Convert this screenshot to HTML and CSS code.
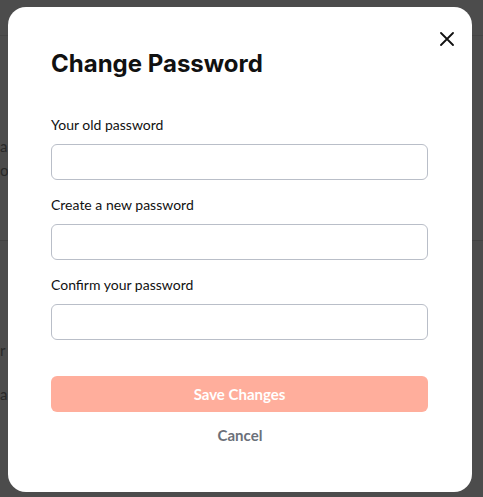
FILE: index.html
```html
<html lang="en">
<head>
    <meta charset="UTF-8">
    <meta name="viewport" content="width=device-width, initial-scale=1.0">
    <title>Change Password</title>
    <link rel="stylesheet" href="styles.css">
</head>
<body>
    <div class="page" aria-hidden="true">
        <div class="page-header"></div>
        <div class="page-body">
            <p class="ghost ghost-1">a</p>
            <p class="ghost ghost-2">o</p>
            <hr class="ghost-rule">
            <p class="ghost ghost-3">r</p>
            <p class="ghost ghost-4">a</p>
        </div>
    </div>
    <div class="overlay">
        <div class="modal" role="dialog" aria-labelledby="modal-title">
            <button class="close-btn" aria-label="Close">
                <svg width="14" height="14" viewBox="0 0 14 14" fill="none" stroke="#111" stroke-width="1.8" stroke-linecap="round">
                    <path d="M1 1L13 13M13 1L1 13"/>
                </svg>
            </button>
            <h1 id="modal-title" class="modal-title">Change Password</h1>
            <form class="form">
                <div class="field">
                    <label for="old-pw">Your old password</label>
                    <input id="old-pw" type="password">
                </div>
                <div class="field">
                    <label for="new-pw">Create a new password</label>
                    <input id="new-pw" type="password">
                </div>
                <div class="field">
                    <label for="confirm-pw">Confirm your password</label>
                    <input id="confirm-pw" type="password">
                </div>
                <button type="button" class="save-btn" disabled>Save Changes</button>
                <button type="button" class="cancel-btn">Cancel</button>
            </form>
        </div>
    </div>
</body>
</html>
```

FILE: styles.css
```css
:root {
    --modal-bg: #ffffff;
    --text-color: #111111;
    --border-color: #b9bec8;
    --save-bg: #ffae9c;
    --cancel-color: #6b7079;
    --font-family: 'Lato', 'Noto Sans', sans-serif;
    --title-font: 'Inter', 'Noto Sans', sans-serif;
}
body {
    margin: 0;
    height: 497px;
    overflow: hidden;
    font-family: var(--font-family);
    color: var(--text-color);
    background-color: #ffffff;
}
.page-header {
    height: 35px;
    border-bottom: 1px solid #e6e6e6;
}
.page-body {
    padding-top: 98px;
}
.ghost {
    margin: 0;
    padding-left: 0;
    font-size: 15px;
    line-height: 24px;
    color: #888;
}
.ghost-rule {
    margin: 58px 0 0;
    border: none;
    border-top: 1px solid #e0e0e0;
}
.ghost-3 {
    margin-top: 97px;
}
.ghost-4 {
    margin-top: 20px;
}
.overlay {
    position: fixed;
    inset: 0;
    background-color: rgba(0, 0, 0, 0.7);
}
.modal {
    position: relative;
    box-sizing: border-box;
    width: 464px;
    height: 485px;
    margin: 7px 0 0 8px;
    padding: 42px 43px 0 43px;
    background-color: var(--modal-bg);
    border-radius: 18px;
}
.close-btn {
    position: absolute;
    top: 24px;
    right: 17px;
    width: 16px;
    height: 16px;
    padding: 0;
    border: none;
    background: none;
    cursor: pointer;
    display: flex;
    align-items: center;
    justify-content: center;
}
.modal-title {
    margin: 0 0 36px;
    font-family: var(--title-font);
    font-size: 24px;
    line-height: 30px;
    font-weight: 700;
}
.form {
    display: flex;
    flex-direction: column;
    margin: 0;
}
.field {
    display: flex;
    flex-direction: column;
    margin-bottom: 15px;
}
.field label {
    font-size: 14px;
    line-height: 20px;
    margin-bottom: 9px;
}
.field input {
    box-sizing: border-box;
    width: 377px;
    height: 36px;
    margin: 0;
    border: 1px solid var(--border-color);
    border-radius: 6px;
    font-family: var(--font-family);
    font-size: 14px;
    padding: 0 12px;
    outline: none;
}
.save-btn {
    margin-top: 21px;
    width: 377px;
    height: 36px;
    border: none;
    border-radius: 6px;
    background-color: var(--save-bg);
    color: #ffffff;
    font-family: var(--font-family);
    font-size: 15px;
    font-weight: 700;
    cursor: not-allowed;
}
.cancel-btn {
    margin-top: 13px;
    align-self: center;
    padding: 0;
    border: none;
    background: none;
    color: var(--cancel-color);
    font-family: var(--font-family);
    font-size: 15px;
    line-height: 20px;
    font-weight: 700;
    cursor: pointer;
}
```
